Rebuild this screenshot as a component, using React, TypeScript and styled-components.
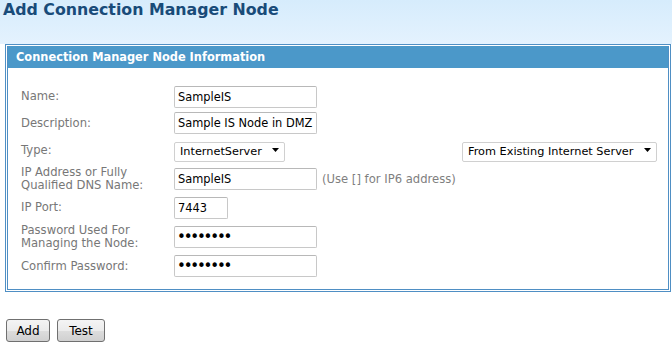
import React from "react";
import styled, { createGlobalStyle } from "styled-components";

const GlobalStyle = createGlobalStyle`
  html, body { margin: 0; padding: 0; background: #ffffff; }
  body { font-family: "DejaVu Sans", Verdana, sans-serif; }
`;

const Page = styled.div`
  width: 672px;
  height: 345px;
  overflow: hidden;
  background: linear-gradient(to bottom, #d6ecfc 0px, #e4f2fe 44px, #ffffff 44px);
`;

const TitleBar = styled.div`
  height: 44px;
  padding-left: 3px;
  box-sizing: border-box;
`;

const Title = styled.h1`
  margin: 0;
  font-family: "DejaVu Sans", Verdana, sans-serif;
  font-weight: bold;
  font-size: 15.8px;
  line-height: 20px;
  color: #184b79;
`;

const Panel = styled.section`
  margin-left: 5px;
  width: 666px;
  box-sizing: border-box;
  border: 1px solid #4f8fc4;
  padding: 1px;
  background: #fff;
`;

const PanelInner = styled.div`
  border: 1px solid #4f8fc4;
  border-top: none;
`;

const PanelHeader = styled.div`
  height: 22px;
  background: #4b98c9;
  color: #ffffff;
  font-weight: bold;
  font-size: 11.4px;
  line-height: 22px;
  padding-left: 8px;
`;

const Form = styled.div`
  display: flex;
  flex-direction: column;
  padding: 15px 11px 9px 13px;
`;

const Row = styled.div<{ $h: number }>`
  display: grid;
  grid-template-columns: 153px 1fr;
  align-items: center;
  height: ${(p) => p.$h}px;
`;

const Label = styled.label`
  font-size: 11.6px;
  line-height: 13px;
  color: #777777;
`;

const Field = styled.div`
  display: flex;
  align-items: center;
  gap: 5px;
`;

const SplitField = styled(Field)`
  justify-content: space-between;
`;

const TextInput = styled.input<{ $w?: number }>`
  box-sizing: border-box;
  width: ${(p) => p.$w ?? 143}px;
  height: 22px;
  border: 1px solid #c8c8c8;
  border-top-color: #b8b8b8;
  border-radius: 2px;
  padding: 0 3px;
  font-family: "DejaVu Sans", Verdana, sans-serif;
  font-size: 11.4px;
  color: #000;
  background: #fff;
  outline: none;
`;

const PasswordInput = styled(TextInput)`
  font-size: 15px;
  letter-spacing: -2.2px;
  padding-left: 2px;
`;

const Hint = styled.span`
  font-size: 11.6px;
  color: #7f7f7f;
`;

const SelectWrap = styled.div<{ $w: number }>`
  position: relative;
  width: ${(p) => p.$w}px;
  height: 20px;
`;

const Select = styled.select`
  appearance: none;
  -webkit-appearance: none;
  box-sizing: border-box;
  width: 100%;
  height: 100%;
  border: 1px solid #d0d0d0;
  border-radius: 2px;
  background: #fff;
  padding: 0 0 0 5px;
  font-family: "DejaVu Sans", Verdana, sans-serif;
  font-size: 11.3px;
  color: #000;
  outline: none;
`;

const Arrow = styled.svg`
  position: absolute;
  right: 6px;
  top: 8px;
  pointer-events: none;
`;

const Buttons = styled.div`
  display: flex;
  gap: 7px;
  margin: 27px 0 0 6px;
`;

const Button = styled.button<{ $w: number }>`
  box-sizing: border-box;
  width: ${(p) => p.$w}px;
  height: 23px;
  border: 1px solid #707070;
  border-radius: 3px;
  background: linear-gradient(to bottom, #f4f4f4 0%, #ebebeb 50%, #dddddd 51%, #d0d0d0 100%);
  font-family: "DejaVu Sans", Verdana, sans-serif;
  font-size: 12px;
  color: #000;
  padding: 0;
`;

const DropArrow = () => (
  <Arrow width="7" height="4" viewBox="0 0 7 4">
    <path d="M0 0 H7 L3.5 4 Z" fill="#000" />
  </Arrow>
);

export default function App() {
  return (
    <Page>
      <GlobalStyle />
      <TitleBar>
        <Title>Add Connection Manager Node</Title>
      </TitleBar>
      <Panel>
        <PanelInner>
          <PanelHeader>Connection Manager Node Information</PanelHeader>
          <Form>
            <Row $h={27}>
              <Label>Name:</Label>
              <Field>
                <TextInput defaultValue="SampleIS" />
              </Field>
            </Row>
            <Row $h={26}>
              <Label>Description:</Label>
              <Field>
                <TextInput defaultValue="Sample IS Node in DMZ" />
              </Field>
            </Row>
            <Row $h={28}>
              <Label>Type:</Label>
              <SplitField>
                <SelectWrap $w={111}>
                  <Select defaultValue="InternetServer">
                    <option>InternetServer</option>
                  </Select>
                  <DropArrow />
                </SelectWrap>
                <SelectWrap $w={195}>
                  <Select defaultValue="From Existing Internet Server">
                    <option>From Existing Internet Server</option>
                  </Select>
                  <DropArrow />
                </SelectWrap>
              </SplitField>
            </Row>
            <Row $h={29}>
              <Label>
                IP Address or Fully
                <br />
                Qualified DNS Name:
              </Label>
              <Field>
                <TextInput defaultValue="SampleIS" />
                <Hint>(Use [] for IP6 address)</Hint>
              </Field>
            </Row>
            <Row $h={29}>
              <Label>IP Port:</Label>
              <Field>
                <TextInput $w={54} defaultValue="7443" />
              </Field>
            </Row>
            <Row $h={30}>
              <Label>
                Password Used For
                <br />
                Managing the Node:
              </Label>
              <Field>
                <PasswordInput type="password" defaultValue="password" />
              </Field>
            </Row>
            <Row $h={28}>
              <Label>Confirm Password:</Label>
              <Field>
                <PasswordInput type="password" defaultValue="password" />
              </Field>
            </Row>
          </Form>
        </PanelInner>
      </Panel>
      <Buttons>
        <Button $w={44}>Add</Button>
        <Button $w={48}>Test</Button>
      </Buttons>
    </Page>
  );
}
